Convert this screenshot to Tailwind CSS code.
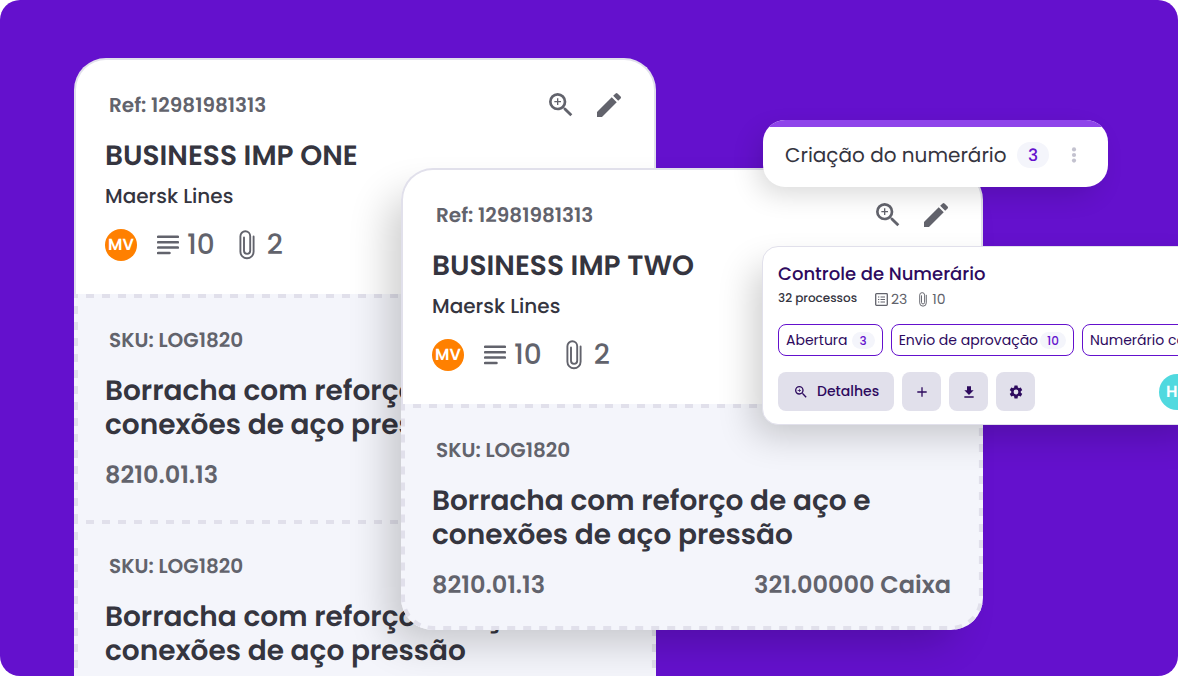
<!DOCTYPE html>
<html lang="pt-BR">
<head>
<meta charset="utf-8">
<meta name="viewport" content="width=device-width, initial-scale=1">
<title>Controle de Numerário</title>
<script src="https://cdn.jsdelivr.net/npm/@tailwindcss/browser@4"></script>
</head>
<body class="bg-white font-['Poppins','Inter',sans-serif] text-[#35353f] [text-rendering:geometricPrecision]">
<svg class="hidden" aria-hidden="true">
  <symbol id="zoom" viewBox="0 0 24 24"><path d="M15.5 14h-.79l-.28-.27A6.47 6.47 0 0 0 16 9.5 6.5 6.5 0 1 0 9.5 16c1.61 0 3.09-.59 4.23-1.57l.27.28v.79l5 4.99L20.49 19l-4.99-5zm-6 0a4.5 4.5 0 1 1 0-9 4.5 4.5 0 0 1 0 9zM12 10h-2v2H9v-2H7V9h2V7h1v2h2z"/></symbol>
  <symbol id="pencil" viewBox="0 0 24 24"><path d="M3 17.25V21h3.75L17.81 9.94l-3.75-3.75zM20.71 7.04a1 1 0 0 0 0-1.41l-2.34-2.34a1 1 0 0 0-1.41 0l-1.83 1.83 3.75 3.75z"/></symbol>
  <symbol id="lines" viewBox="0 0 22 20"><path d="M1.1 1.8h19.8M1.1 7.2h19.8M1.1 12.6h19.8M1.1 18h11.4" fill="none" stroke="currentColor" stroke-width="2.5" stroke-linecap="round"/></symbol>
  <symbol id="clip" viewBox="0 0 16 30"><path d="M14.6 6.5v15.2a6.6 6.6 0 0 1-13.2 0V6.2a4.9 4.9 0 0 1 9.8 0v14.6a3.1 3.1 0 0 1-6.2 0V7.5" fill="none" stroke="currentColor" stroke-width="1.9" stroke-linecap="round"/></symbol>
</svg>

<main class="relative h-screen overflow-hidden rounded-[20px] bg-[#6411cd]">

  <article class="absolute left-[74px] top-[58px] w-[49.4%]">
    <header class="rounded-t-[32px] border-2 border-b-0 border-[#e1e0eb] bg-white pt-[25px] pr-[29px] pb-[33px] pl-[29px]">
      <div class="flex h-10 items-center justify-between">
        <p class="pl-1 text-[20px] font-semibold text-[#62636c]">Ref: 12981981313</p>
        <div class="flex gap-4 text-[#62636c]">
          <button type="button" aria-label="Ampliar"><svg class="size-8 fill-current"><use href="#zoom"/></svg></button>
          <button type="button" aria-label="Editar"><svg class="size-8 fill-current"><use href="#pencil"/></svg></button>
        </div>
      </div>
      <h2 class="mt-[11px] text-[28px] leading-10 font-semibold">BUSINESS IMP ONE</h2>
      <p class="mt-1 text-[20px] leading-8 font-medium">Maersk Lines</p>
      <div class="mt-[17px] flex h-8 items-center text-[28px] font-medium text-[#62636c]">
        <span class="flex size-8 items-center justify-center rounded-full bg-[#ff8000] text-[16px] font-semibold text-white">MV</span>
        <svg class="ml-5 h-5 w-[22px]"><use href="#lines"/></svg><span class="ml-2">10</span>
        <svg class="ml-6 h-[30px] w-4"><use href="#clip"/></svg><span class="ml-3">2</span>
      </div>
    </header>
    <section class="relative overflow-hidden bg-[#f4f5fb] pt-[30px] pr-8 pb-[28px] pl-[31px]">
      <svg class="absolute inset-0 size-full" fill="none" stroke="#e1e0eb" stroke-width="8" stroke-dasharray="8 8" stroke-dashoffset="4" aria-hidden="true"><line x1="0" y1="0" x2="100%" y2="0"/><line x1="0" y1="0" x2="0" y2="100%"/><line x1="100%" y1="0" x2="100%" y2="100%"/></svg>
      <p class="pl-1 text-[20px] leading-8 font-semibold text-[#62636c]">SKU: LOG1820</p>
      <h3 class="mt-[18px] text-[28px] leading-[34px] font-semibold">Borracha com reforço de aço e<br>conexões de aço pressão</h3>
      <p class="mt-[18px] flex justify-between text-[24px] leading-8 font-semibold text-[#62636c]"><span>8210.01.13</span></p>
    </section>
    <section class="relative overflow-hidden bg-[#f4f5fb] pt-[30px] pr-8 pb-[28px] pl-[31px]">
      <svg class="absolute inset-0 size-full" fill="none" stroke="#e1e0eb" stroke-width="8" stroke-dasharray="8 8" stroke-dashoffset="4" aria-hidden="true"><line x1="0" y1="0" x2="100%" y2="0"/><line x1="0" y1="0" x2="0" y2="100%"/><line x1="100%" y1="0" x2="100%" y2="100%"/></svg>
      <p class="pl-1 text-[20px] leading-8 font-semibold text-[#62636c]">SKU: LOG1820</p>
      <h3 class="mt-[18px] text-[28px] leading-[34px] font-semibold">Borracha com reforço de aço e<br>conexões de aço pressão</h3>
    </section>
  </article>

  <article class="absolute left-[401px] top-[168px] w-[49.4%] rounded-[32px] shadow-[-20px_20px_40px_-8px_rgba(0,0,0,0.2)]">
    <header class="rounded-t-[32px] border-2 border-b-0 border-[#e1e0eb] bg-white pt-[25px] pr-[29px] pb-[33px] pl-[29px]">
      <div class="flex h-10 items-center justify-between">
        <p class="pl-1 text-[20px] font-semibold text-[#62636c]">Ref: 12981981313</p>
        <div class="flex gap-4 text-[#62636c]">
          <button type="button" aria-label="Ampliar"><svg class="size-8 fill-current"><use href="#zoom"/></svg></button>
          <button type="button" aria-label="Editar"><svg class="size-8 fill-current"><use href="#pencil"/></svg></button>
        </div>
      </div>
      <h2 class="mt-[11px] text-[28px] leading-10 font-semibold">BUSINESS IMP TWO</h2>
      <p class="mt-1 text-[20px] leading-8 font-medium">Maersk Lines</p>
      <div class="mt-[17px] flex h-8 items-center text-[28px] font-medium text-[#62636c]">
        <span class="flex size-8 items-center justify-center rounded-full bg-[#ff8000] text-[16px] font-semibold text-white">MV</span>
        <svg class="ml-5 h-5 w-[22px]"><use href="#lines"/></svg><span class="ml-2">10</span>
        <svg class="ml-6 h-[30px] w-4"><use href="#clip"/></svg><span class="ml-3">2</span>
      </div>
    </header>
    <section class="relative overflow-hidden rounded-b-[32px] bg-[#f4f5fb] pt-[30px] pr-8 pb-[28px] pl-[31px]">
      <svg class="absolute inset-0 size-full" fill="none" stroke="#e1e0eb" stroke-width="8" stroke-dasharray="8 8" stroke-dashoffset="4" aria-hidden="true"><line x1="0" y1="0" x2="100%" y2="0"/><rect x="0" y="-60" rx="32" class="h-[calc(100%+60px)] w-full"/></svg>
      <p class="pl-1 text-[20px] leading-8 font-semibold text-[#62636c]">SKU: LOG1820</p>
      <h3 class="mt-[18px] text-[28px] leading-[34px] font-semibold">Borracha com reforço de aço e<br>conexões de aço pressão</h3>
      <p class="mt-[18px] flex justify-between text-[24px] leading-8 font-semibold text-[#62636c]"><span>8210.01.13</span><span>321.00000 Caixa</span></p>
    </section>
  </article>

  <div class="absolute left-[763px] top-[120px] w-[345px] overflow-hidden rounded-[22px] bg-white shadow-[-8px_10px_28px_-4px_rgba(0,0,0,0.16)]">
    <div class="h-[7px] bg-[#8f45ea]"></div>
    <div class="flex items-center pt-[15px] pr-[30px] pb-[19px] pl-[22px]">
      <h2 class="text-[20px] leading-[26px] whitespace-nowrap">Criação do numerário</h2>
      <span class="ml-auto rounded-full bg-[#f4f5fb] px-[11px] text-[17px] leading-[26px] font-medium text-[#6411cd]">3</span>
      <button type="button" aria-label="Mais opções" class="ml-[21px]"><svg class="h-4 w-2 fill-[#c3c2cf]" viewBox="0 0 8 16"><circle cx="4" cy="2.4" r="2.1"/><circle cx="4" cy="8" r="2.1"/><circle cx="4" cy="13.6" r="2.1"/></svg></button>
    </div>
  </div>

  <section class="absolute top-[246px] -right-[34px] left-[762px] rounded-[16px] border border-[#e1e0eb] bg-white pt-[14px] pr-4 pb-[13px] pl-[15px] text-[#2d0a5e] shadow-[-14px_16px_36px_-6px_rgba(0,0,0,0.2)]">
    <h2 class="text-[18px] leading-7 font-medium">Controle de Numerário</h2>
    <div class="flex h-5 items-center text-[14px] text-[#62636c]">
      <p class="text-[12px] font-medium text-[#35353f]">32 processos</p>
      <svg class="ml-[18px] size-[13px]" viewBox="0 0 13 13" fill="none" stroke="currentColor"><rect x=".7" y=".7" width="11.6" height="11.6" rx=".8" stroke-width="1.3"/><path d="M3 4h1.3M3 6.5h1.3M3 9h1.3M5.5 4H10M5.5 6.5H10M5.5 9H10" stroke-width="1.1"/></svg>
      <span class="ml-[3px]">23</span>
      <svg class="ml-3 h-[15px] w-2"><use href="#clip"/></svg>
      <span class="ml-[5px]">10</span>
    </div>
    <div class="mt-[15px] flex gap-2 overflow-hidden text-[14px] whitespace-nowrap">
      <button type="button" class="flex h-8 shrink-0 items-center gap-1 rounded-lg border border-[#6411cd] px-[7px]">Abertura<span class="rounded-full bg-[#f4f5fb] px-2 text-[12px] leading-[17px] font-medium text-[#6411cd]">3</span></button>
      <button type="button" class="flex h-8 shrink-0 items-center gap-0.5 rounded-lg border border-[#6411cd] px-[7px]">Envio de aprovação<span class="rounded-full bg-[#f4f5fb] px-[7px] text-[12px] leading-[17px] font-medium text-[#6411cd]">10</span></button>
      <button type="button" class="flex h-8 shrink-0 items-center gap-1 rounded-lg border border-[#6411cd] px-[7px]">Numerário confirmado</button>
    </div>
    <div class="mt-4 flex items-center gap-2">
      <button type="button" class="flex h-[39px] items-center gap-2 rounded-lg bg-[#e1e0eb] px-[15px] text-[14px] font-medium"><svg class="size-4 fill-current"><use href="#zoom"/></svg>Detalhes</button>
      <button type="button" aria-label="Adicionar" class="flex size-[39px] items-center justify-center rounded-lg bg-[#e1e0eb]"><svg class="size-[10px]" viewBox="0 0 10 10"><path d="M5 .3v9.4M.3 5h9.4" stroke="currentColor" stroke-width="1.3"/></svg></button>
      <button type="button" aria-label="Baixar" class="flex size-[39px] items-center justify-center rounded-lg bg-[#e1e0eb]"><svg class="size-4 fill-current" viewBox="0 0 24 24"><path d="M19 9.5h-4v-6H9v6H5l7 7zM5 18.5v2h14v-2z"/></svg></button>
      <button type="button" aria-label="Configurações" class="flex size-[39px] items-center justify-center rounded-lg bg-[#e1e0eb]"><svg class="size-4 fill-current" viewBox="0 0 24 24"><path d="M19.14 12.94c.04-.3.06-.61.06-.94 0-.32-.02-.64-.07-.94l2.03-1.58a.49.49 0 0 0 .12-.61l-1.92-3.32a.49.49 0 0 0-.59-.22l-2.39.96a7 7 0 0 0-1.62-.94l-.36-2.54a.48.48 0 0 0-.48-.41h-3.84a.47.47 0 0 0-.47.41l-.36 2.54c-.59.24-1.13.57-1.62.94l-2.39-.96a.48.48 0 0 0-.59.22L2.74 8.87a.47.47 0 0 0 .12.61l2.03 1.58c-.05.3-.09.63-.09.94s.02.64.07.94l-2.03 1.58a.49.49 0 0 0-.12.61l1.92 3.32c.12.22.37.29.59.22l2.39-.96c.5.38 1.03.7 1.62.94l.36 2.54c.05.24.24.41.48.41h3.84c.24 0 .44-.17.47-.41l.36-2.54a7 7 0 0 0 1.62-.94l2.39.96c.22.08.47 0 .59-.22l1.92-3.32a.47.47 0 0 0-.12-.61zM12 15.6a3.6 3.6 0 1 1 0-7.2 3.6 3.6 0 0 1 0 7.2z"/></svg></button>
      <span class="ml-auto flex size-9 items-center rounded-full bg-[#50d9df] pl-[7px] text-[16px] font-semibold text-white">HM</span>
    </div>
  </section>
</main>
</body>
</html>
